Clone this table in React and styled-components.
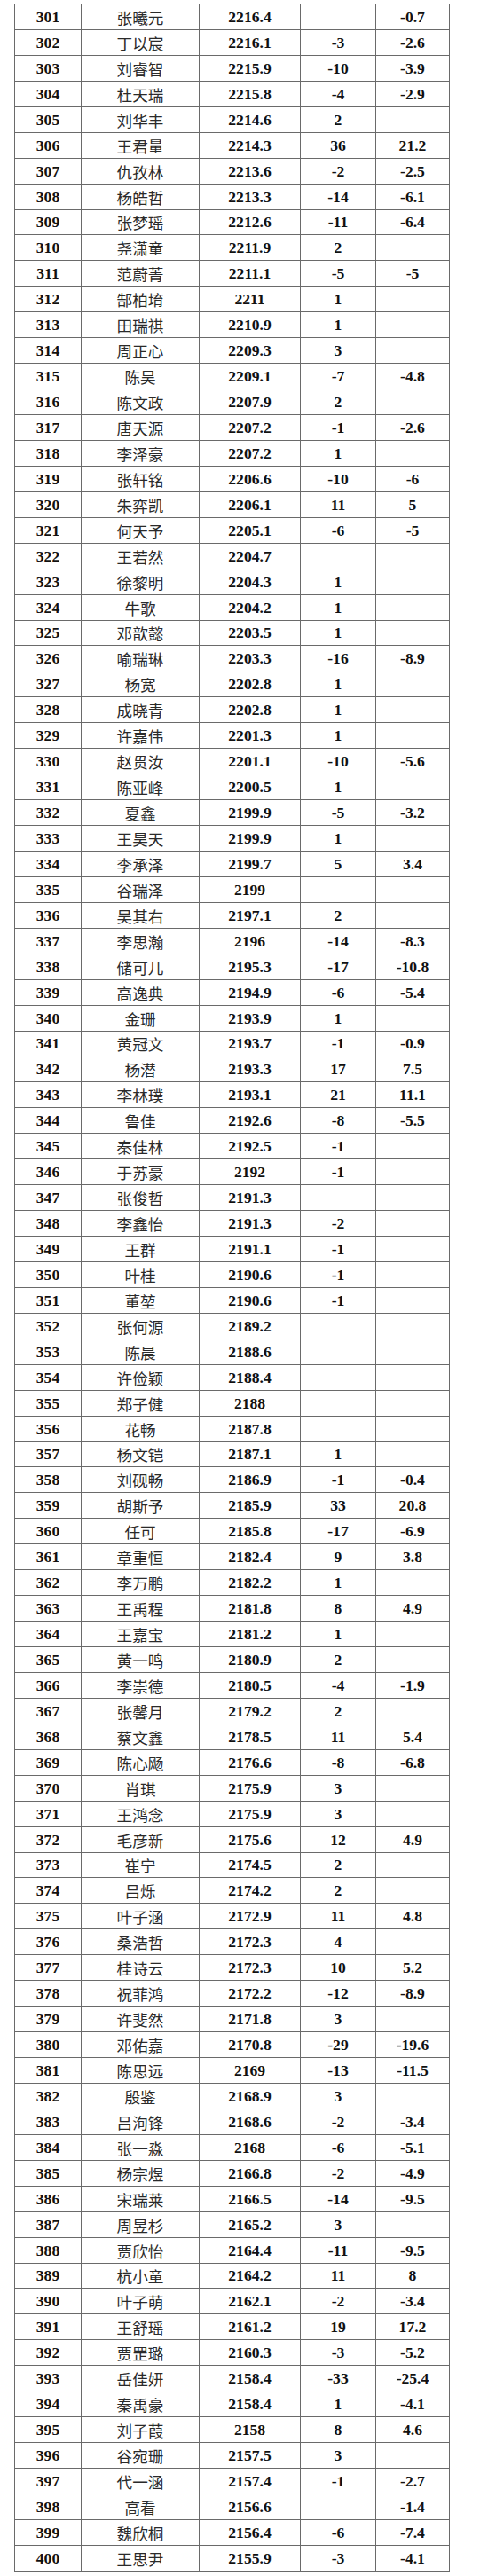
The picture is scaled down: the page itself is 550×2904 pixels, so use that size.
import React from "react";
import styled, { createGlobalStyle } from "styled-components";

const Global = createGlobalStyle`
  html, body { margin: 0; padding: 0; background: #fff; }
  body { font-family: "Liberation Serif", "Times New Roman", serif; }
`;

const raw = `301|张曦元|2216.4||-0.7
302|丁以宸|2216.1|-3|-2.6
303|刘睿智|2215.9|-10|-3.9
304|杜天瑞|2215.8|-4|-2.9
305|刘华丰|2214.6|2|
306|王君量|2214.3|36|21.2
307|仇孜林|2213.6|-2|-2.5
308|杨皓哲|2213.3|-14|-6.1
309|张梦瑶|2212.6|-11|-6.4
310|尧潇童|2211.9|2|
311|范蔚菁|2211.1|-5|-5
312|郜柏堉|2211|1|
313|田瑞祺|2210.9|1|
314|周正心|2209.3|3|
315|陈昊|2209.1|-7|-4.8
316|陈文政|2207.9|2|
317|唐天源|2207.2|-1|-2.6
318|李泽豪|2207.2|1|
319|张轩铭|2206.6|-10|-6
320|朱弈凯|2206.1|11|5
321|何天予|2205.1|-6|-5
322|王若然|2204.7||
323|徐黎明|2204.3|1|
324|牛歌|2204.2|1|
325|邓歆懿|2203.5|1|
326|喻瑞琳|2203.3|-16|-8.9
327|杨宽|2202.8|1|
328|成晓青|2202.8|1|
329|许嘉伟|2201.3|1|
330|赵贯汝|2201.1|-10|-5.6
331|陈亚峰|2200.5|1|
332|夏鑫|2199.9|-5|-3.2
333|王昊天|2199.9|1|
334|李承泽|2199.7|5|3.4
335|谷瑞泽|2199||
336|吴其右|2197.1|2|
337|李思瀚|2196|-14|-8.3
338|储可儿|2195.3|-17|-10.8
339|高逸典|2194.9|-6|-5.4
340|金珊|2193.9|1|
341|黄冠文|2193.7|-1|-0.9
342|杨潜|2193.3|17|7.5
343|李林璞|2193.1|21|11.1
344|鲁佳|2192.6|-8|-5.5
345|秦佳林|2192.5|-1|
346|于苏豪|2192|-1|
347|张俊哲|2191.3||
348|李鑫怡|2191.3|-2|
349|王群|2191.1|-1|
350|叶桂|2190.6|-1|
351|董堃|2190.6|-1|
352|张何源|2189.2||
353|陈晨|2188.6||
354|许俭颖|2188.4||
355|郑子健|2188||
356|花畅|2187.8||
357|杨文铠|2187.1|1|
358|刘砚畅|2186.9|-1|-0.4
359|胡斯予|2185.9|33|20.8
360|任可|2185.8|-17|-6.9
361|章重恒|2182.4|9|3.8
362|李万鹏|2182.2|1|
363|王禹程|2181.8|8|4.9
364|王嘉宝|2181.2|1|
365|黄一鸣|2180.9|2|
366|李崇德|2180.5|-4|-1.9
367|张馨月|2179.2|2|
368|蔡文鑫|2178.5|11|5.4
369|陈心飏|2176.6|-8|-6.8
370|肖琪|2175.9|3|
371|王鸿念|2175.9|3|
372|毛彦新|2175.6|12|4.9
373|崔宁|2174.5|2|
374|吕烁|2174.2|2|
375|叶子涵|2172.9|11|4.8
376|桑浩哲|2172.3|4|
377|桂诗云|2172.3|10|5.2
378|祝菲鸿|2172.2|-12|-8.9
379|许斐然|2171.8|3|
380|邓佑嘉|2170.8|-29|-19.6
381|陈思远|2169|-13|-11.5
382|殷鉴|2168.9|3|
383|吕洵锋|2168.6|-2|-3.4
384|张一淼|2168|-6|-5.1
385|杨宗煜|2166.8|-2|-4.9
386|宋瑞莱|2166.5|-14|-9.5
387|周昱杉|2165.2|3|
388|贾欣怡|2164.4|-11|-9.5
389|杭小童|2164.2|11|8
390|叶子萌|2162.1|-2|-3.4
391|王舒瑶|2161.2|19|17.2
392|贾罡璐|2160.3|-3|-5.2
393|岳佳妍|2158.4|-33|-25.4
394|秦禹豪|2158.4|1|-4.1
395|刘子葭|2158|8|4.6
396|谷宛珊|2157.5|3|
397|代一涵|2157.4|-1|-2.7
398|高看|2156.6||-1.4
399|魏欣桐|2156.4|-6|-7.4
400|王思尹|2155.9|-3|-4.1`;

const rows = raw.split("\n").map((l) => l.split("|"));

const Page = styled.div`
  padding: 4px 0 4px 16px;
  background: #fff;
`;

const Grid = styled.div`
  display: grid;
  grid-template-columns: 75px 133px 114px 85px 83px;
  grid-auto-rows: 28.95px;
  width: max-content;
  border-top: 1px solid #6a6a6a;
  border-left: 1px solid #6a6a6a;
`;

const Cell = styled.div`
  box-sizing: border-box;
  display: flex;
  align-items: center;
  justify-content: center;
  border-right: 1px solid #6a6a6a;
  border-bottom: 1px solid #6a6a6a;
  color: #111;
  white-space: nowrap;
  font-family: ${(p) =>
    p.$cjk
      ? `"Liberation Serif", "Noto Sans CJK SC", serif`
      : `"Liberation Serif", "Times New Roman", serif`};
  font-size: 17.6px;
  font-weight: ${(p) => (p.$cjk ? 400 : 700)};
  color: ${(p) => (p.$cjk ? "#2a2a2a" : "#111")};
  padding-top: 1px;
`;

export default function App() {
  return (
    <>
      <Global />
      <Page>
        <Grid>
          {rows.map(([rank, name, rating, change, diff]) => (
            <React.Fragment key={rank}>
              <Cell>{rank}</Cell>
              <Cell $cjk>{name}</Cell>
              <Cell>{rating}</Cell>
              <Cell>{change}</Cell>
              <Cell>{diff}</Cell>
            </React.Fragment>
          ))}
        </Grid>
      </Page>
    </>
  );
}
